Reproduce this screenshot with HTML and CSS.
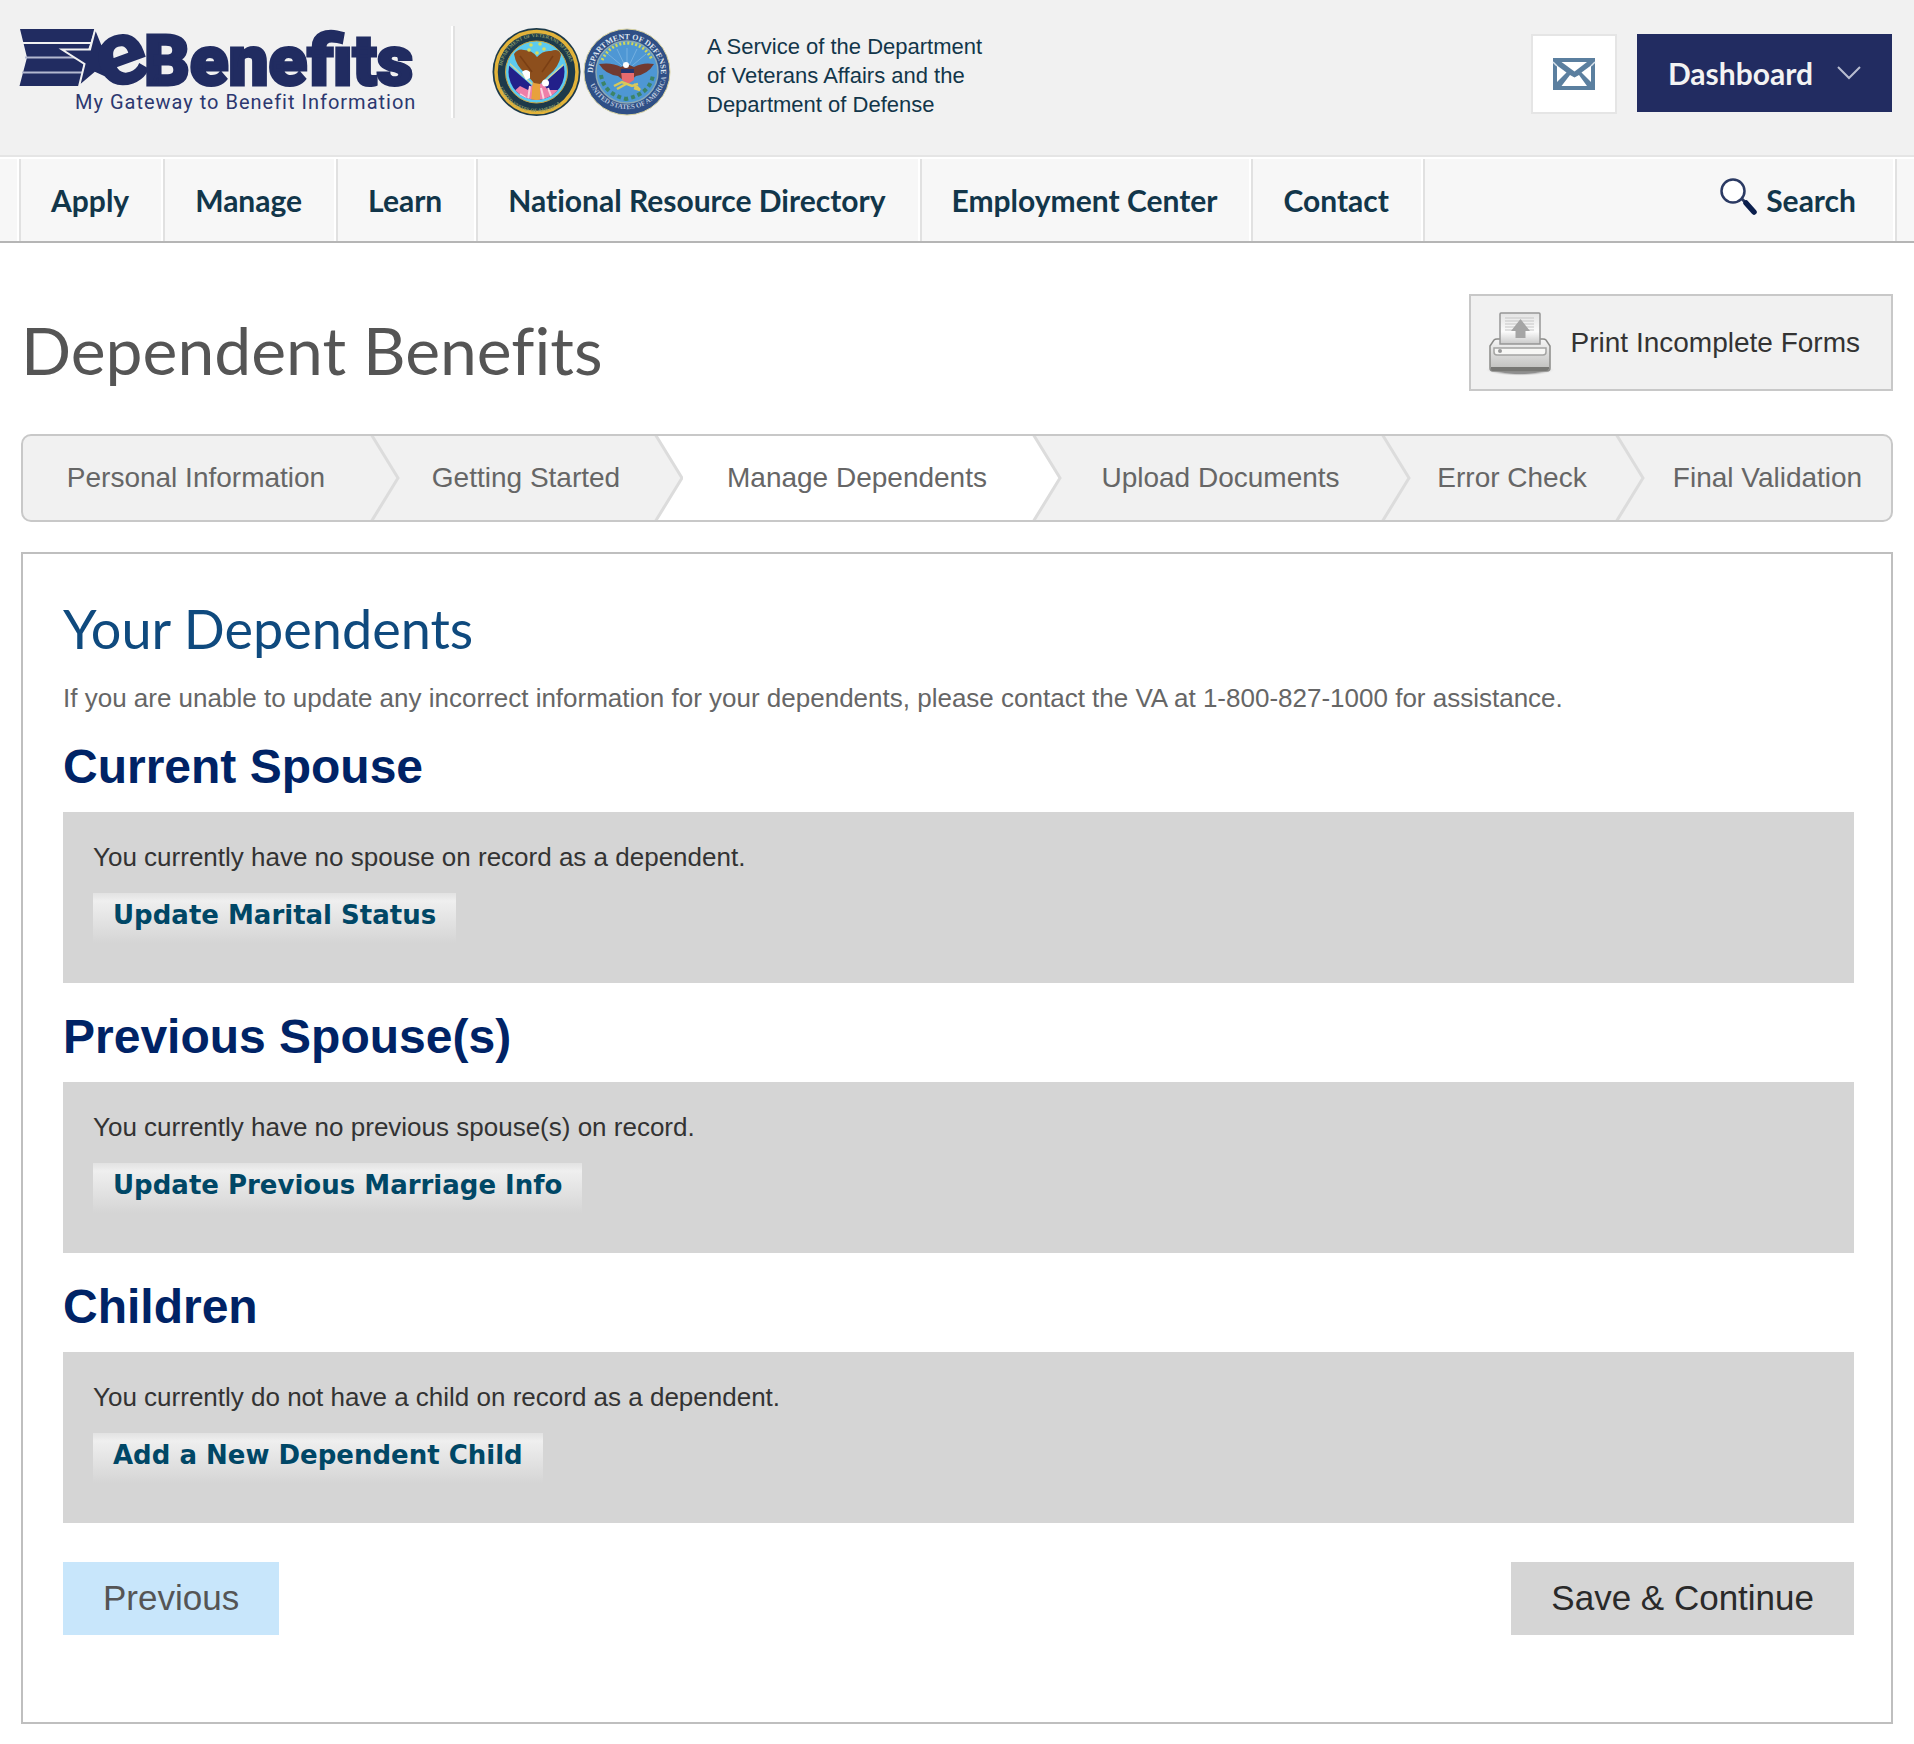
FILE: index.html
```html
<!DOCTYPE html>
<html lang="en">
<head>
<meta charset="utf-8">
<title>Dependent Benefits - eBenefits</title>
<meta name="viewport" content="width=device-width, initial-scale=1">
<link rel="stylesheet" href="styles.css">
</head>
<body>
<header class="masthead">
  <a class="logo" href="#" aria-label="eBenefits home">
    <svg width="400" height="92" viewBox="18 26 400 92" role="img">
      <path d="M20 29H95L88 86H19.500L27 57.500Z" fill="#212c61"/>
      <path d="M80 86L84 62L95 29H100V86Z" fill="#f1f1f1"/>
      <path d="M22 43H92" stroke="#f1f1f1" stroke-width="2"/>
      <path d="M25 57.500H84M22 72.500H82" stroke="#b3b8d0" stroke-width="2"/>
      <path d="M95.500 28L102 44L113 42L106 60L106 78L95 73L79 86.500L84.500 64L62 49.500H90Z" fill="#212c61" stroke="#f1f1f1" stroke-width="2"/>
      <text class="logo-e" x="121" y="85" text-anchor="middle" transform="rotate(-20 121 58)">e</text>
      <text class="logo-name" x="144" y="85">Benefits</text>
      <text class="logo-tag" x="75" y="109">My Gateway to Benefit Information</text>
    </svg>
  </a>
  <span class="divider"></span>
  <svg class="seals" width="182" height="92" viewBox="490 26 182 92" aria-hidden="true">
    <defs>
      <path id="va-top" d="M501.500 72A35 35 0 0 1 571.500 72"/>
      <path id="va-bottom" d="M496.500 72A40 40 0 0 0 576.500 72"/>
      <path id="dod-top" d="M593.500 79A34 34 0 1 1 660.500 79"/>
      <path id="dod-bottom" d="M588 78A40 40 0 0 0 666 78"/>
      <clipPath id="va-clip"><circle cx="536.500" cy="72" r="28"/></clipPath>
    </defs>
    <circle cx="536.500" cy="72" r="44" fill="#1d3a4a"/>
    <circle cx="536.500" cy="72" r="40.500" fill="none" stroke="#e2b33a" stroke-width="3.500"/>
    <circle cx="536.500" cy="72" r="31" fill="#5ccbef" stroke="#c9a640" stroke-width="1"/>
    <g clip-path="url(#va-clip)">
      <path d="M505 62L530 84L536 92L544 82L568 62V104H505Z" fill="#22208a"/>
      <path d="M508 62L532 84M566 62L542 84" stroke="#c9d6a0" stroke-width="1.500"/>
      <path d="M511 94L520 86L528 90L535 82L543 84L548 90L558 90L564 98L552 104H520Z" fill="#ee7fa8"/>
      <path d="M520 94L526 98M548 88L552 98M530 86L528 100M541 88L544 100" stroke="#fbd3df" stroke-width="2"/>
      <path d="M533 78H540V104H531Z" fill="#e8a13c"/>
    </g>
    <path d="M514 54Q518 48 524 50Q532 50 537 57Q543 50 551 51Q559 48 561 55Q559 67 549 75L540 84L534 83L525 73Q516 66 514 54Z" fill="#8d4f1d"/>
    <path d="M520 56L532 72M553 56L542 72" stroke="#7a3f14" stroke-width="1.500"/>
    <path d="M522 72Q526 68 530 72L530 78L526 80Z" fill="#fff"/>
    <circle cx="545.500" cy="83" r="3.500" fill="#fff"/>
    <g fill="#d8dc5a"><circle cx="531" cy="45" r="1.800"/><circle cx="540" cy="44" r="1.800"/><circle cx="544" cy="49" r="1.800"/><circle cx="529" cy="50" r="1.800"/><circle cx="537" cy="53" r="1.800"/></g>
    <text class="seal-text va"><textPath href="#va-top" startOffset="6">DEPARTMENT OF VETERANS AFFAIRS</textPath></text>
    <text class="seal-text va"><textPath href="#va-bottom" startOffset="16">UNITED STATES OF AMERICA</textPath></text>

    <circle cx="627" cy="72" r="43" fill="#2f4f86" stroke="#d9d3a0" stroke-width="1"/>
    <circle cx="627" cy="72" r="31" fill="#4e97d4" stroke="#8aa9b6" stroke-width="1.500"/>
    <g stroke="#74b0e0" stroke-width="1"><path d="M627 70V48M627 70L617 49M627 70L637 49M627 70L608 54M627 70L646 54"/></g>
    <path d="M602 60Q610 44 627 43Q645 44 652 60" fill="none" stroke="#cfd65a" stroke-width="3" stroke-dasharray="2 2"/>
    <path d="M601 75Q604 94 626 99Q650 94 653 75" fill="none" stroke="#3c8468" stroke-width="4" stroke-dasharray="4 3"/>
    <path d="M599 64Q612 62 621 67L627 64L634 67Q643 62 654 64Q648 74 636 76L631 80H623L618 76Q605 74 599 64Z" fill="#713a31"/>
    <path d="M621 71H634V80L628 84L622 80Z" fill="#e76b6f"/>
    <path d="M621 69H634V73H621Z" fill="#25356f"/>
    <circle cx="626" cy="65" r="3" fill="#fff"/>
    <path d="M614 86L622 82L632 86L638 84M617 89L626 84M634 84L640 90L634 88" stroke="#d9c95a" stroke-width="2.500" fill="none"/>
    <text class="seal-text dod"><textPath href="#dod-top" startOffset="6">DEPARTMENT OF DEFENSE</textPath></text>
    <text class="seal-text dod-low"><textPath href="#dod-bottom" startOffset="7">UNITED STATES OF AMERICA</textPath></text>
  </svg>
  <p class="service">A Service of the Department<br>of Veterans Affairs and the<br>Department of Defense</p>
  <div class="account">
    <button class="mail" type="button" aria-label="Messages">
      <svg width="42" height="32" viewBox="0 0 42 32">
        <path fill="#5b7f9f" d="M0 0H42V32H0Z"/>
        <path fill="#fff" d="M8.500 4H34L21.500 13.500Z"/>
        <path fill="#fff" d="M4 7.500L13.500 14.500L4 24Z"/>
        <path fill="#fff" d="M38 7.500L28.500 14.500L38 24Z"/>
        <path fill="#fff" d="M8.500 28L17 17L21.500 19.500L26 17L34 28Z"/>
        <path d="M0 4L4 8M42 4L38 8" stroke="#dbe4ec" stroke-width="1.500"/>
      </svg>
    </button>
    <button class="dashboard" type="button">Dashboard
      <svg width="24" height="14" viewBox="0 0 24 14"><path d="M1 1L12 12L23 1" fill="none" stroke="#b9bdd0" stroke-width="2"/></svg>
    </button>
  </div>
</header>

<nav class="navbar" aria-label="Main">
  <ul class="menu">
    <li><a href="#">Apply</a></li>
    <li><a href="#">Manage</a></li>
    <li><a href="#">Learn</a></li>
    <li><a href="#">National Resource Directory</a></li>
    <li><a href="#">Employment Center</a></li>
    <li><a href="#">Contact</a></li>
  </ul>
  <a class="search" href="#">
    <svg width="38" height="46" viewBox="0 0 38 46">
      <circle cx="13" cy="14" r="11.500" fill="#fff" stroke="#2b3a63" stroke-width="2.500"/>
      <path d="M22 22L26 26" stroke="#2b3a63" stroke-width="3"/>
      <path d="M26 26L34 35" stroke="#0b1f4d" stroke-width="5.500" stroke-linecap="round"/>
    </svg>
    Search
  </a>
</nav>

<main class="content">
  <div class="title-row">
    <h1>Dependent Benefits</h1>
    <button class="print" type="button">
      <svg width="70" height="66" viewBox="0 0 70 66">
        <defs>
          <linearGradient id="body" x1="0" y1="0" x2="0" y2="1"><stop offset="0" stop-color="#f6f6f6"/><stop offset="1" stop-color="#bdbdbb"/></linearGradient>
          <linearGradient id="sheet" x1="0" y1="0" x2="0" y2="1"><stop offset="0" stop-color="#e4e4e4"/><stop offset=".6" stop-color="#fbfbfb"/><stop offset="1" stop-color="#c9c9c9"/></linearGradient>
          <radialGradient id="shade"><stop offset=".6" stop-color="#8f8f8f"/><stop offset="1" stop-color="#f1f1f1" stop-opacity="0"/></radialGradient>
        </defs>
        <ellipse cx="35" cy="60" rx="35" ry="6" fill="url(#shade)"/>
        <path d="M5 36L9 30Q10 29 12 29H58Q60 29 61 30L65 36V58Q65 61 62 61H8Q5 61 5 58Z" fill="url(#body)" stroke="#8a8a88" stroke-width="1.500"/>
        <path d="M6 57H64V59Q63 61 61 61H9Q6 61 6 59Z" fill="#777774"/>
        <path d="M15 34V4Q15 3 16 3H54Q55 3 55 4V34Z" fill="url(#sheet)" stroke="#969696" stroke-width="1.500"/>
        <path d="M20 8H49M20 11H49M20 14H49M20 17H49M20 20H49" stroke="#c5c5c5" stroke-width="1"/>
        <path d="M35.500 9L45 21H40.500V28H30.500V21H26Z" fill="#a5a5a5"/>
        <path d="M9 38H61V42Q61 45 58 45H12Q9 45 9 42Z" fill="#f7f7f5" stroke="#a4a4a2" stroke-width="1.500"/>
        <circle cx="15" cy="41" r="2" fill="#999"/>
      </svg>
      Print Incomplete Forms
    </button>
  </div>

  <ol class="steps">
    <li><span>Personal Information</span><svg class="arrow" viewBox="0 0 30 84"><path class="edge" d="M2 -2L29 42L2 86"/></svg></li>
    <li><span>Getting Started</span><svg class="arrow" viewBox="0 0 30 84"><path class="next-active" d="M2 0H30V84H2L29 42Z"/><path class="edge" d="M2 -2L29 42L2 86"/></svg></li>
    <li class="active" aria-current="step"><span>Manage Dependents</span><svg class="arrow" viewBox="0 0 30 84"><path class="next" d="M2 0H30V84H2L29 42Z"/><path class="edge" d="M2 -2L29 42L2 86"/></svg></li>
    <li><span>Upload Documents</span><svg class="arrow" viewBox="0 0 30 84"><path class="edge" d="M2 -2L29 42L2 86"/></svg></li>
    <li><span>Error Check</span><svg class="arrow" viewBox="0 0 30 84"><path class="edge" d="M2 -2L29 42L2 86"/></svg></li>
    <li><span>Final Validation</span></li>
  </ol>

  <section class="panel">
    <h2>Your Dependents</h2>
    <p class="intro">If you are unable to update any incorrect information for your dependents, please contact the VA at 1-800-827-1000 for assistance.</p>

    <h3>Current Spouse</h3>
    <div class="record">
      <p>You currently have no spouse on record as a dependent.</p>
      <button class="update" type="button">Update Marital Status</button>
    </div>

    <h3>Previous Spouse(s)</h3>
    <div class="record">
      <p>You currently have no previous spouse(s) on record.</p>
      <button class="update" type="button">Update Previous Marriage Info</button>
    </div>

    <h3>Children</h3>
    <div class="record">
      <p>You currently do not have a child on record as a dependent.</p>
      <button class="update" type="button">Add a New Dependent Child</button>
    </div>

    <div class="actions">
      <button class="previous" type="button">Previous</button>
      <button class="save" type="button">Save &amp; Continue</button>
    </div>
  </section>
</main>
</body>
</html>
```
FILE: styles.css
```css
* { box-sizing: border-box; }

body {
  margin: 0;
  background: #fff;
  color: #333;
  font-family: "Liberation Sans", Arial, sans-serif;
  font-size: 26px;
  line-height: 30px;
}

h1, h2, h3, p, ul, ol { margin: 0; padding: 0; }
ul, ol { list-style: none; }
svg { display: block; flex: none; overflow: visible; }
button { border: 0; font: inherit; color: inherit; cursor: pointer; white-space: nowrap; }
a { color: inherit; text-decoration: none; }

/* Masthead */
.masthead {
  display: flex;
  align-items: flex-start;
  padding: 26px 22px 36px 18px;
  background: #f1f1f1;
  color: #12364a;
}
.logo-e { font: 900 94px Roboto, sans-serif; fill: #212c61; }
.logo-name { font: 900 71px Roboto, sans-serif; fill: #212c61; stroke: #212c61; stroke-width: 3px; }
.logo-tag { font: 400 20px Roboto, sans-serif; fill: #2c3870; letter-spacing: 1px; }
.divider {
  width: 4px;
  height: 92px;
  margin: 0 35px 0 33px;
  background: #e1e1e1;
  border-left: 2px solid #fff;
}
.seal-text { font-family: "Liberation Serif", serif; font-weight: bold; }
.seal-text.va { font-size: 5px; fill: #8a9a6a; }
.seal-text.dod { font-size: 8px; fill: #dfe6f0; }
.seal-text.dod-low { font-size: 7px; fill: #b9c6dc; }
.service {
  margin-left: 35px;
  padding-top: 6px;
  font-size: 22px;
  line-height: 29px;
}
.account {
  display: flex;
  align-items: flex-start;
  gap: 20px;
  margin-left: auto;
  padding-top: 8px;
}
.mail {
  padding: 22px 20px;
  background: #fff;
  border: 2px solid #e5e5e5;
}
.dashboard {
  display: flex;
  align-items: center;
  gap: 24px;
  padding: 20px 31px;
  background: #222c61;
  color: #f3f3f3;
  font: bold 30px/38px Lato, sans-serif;
}

/* Navigation */
.navbar {
  display: flex;
  justify-content: space-between;
  padding: 0 17px;
  background: #f7f7f7;
  border-top: 2px solid #e5e5e5;
  border-bottom: 2px solid #b5b5b5;
  box-shadow: inset 0 2px #fff;
  color: #12364a;
  font: bold 30px/82px Lato, sans-serif;
  font-variant-ligatures: none;
}
.menu {
  display: flex;
  border-left: 2px solid #fff;
  margin-top: 2px;
}
.menu li {
  padding: 0 34px 0 30px;
  border-right: 2px solid #e1e1e1;
  box-shadow: inset -2px 0 #fff;
}
.menu li:first-child { border-left: 2px solid #e1e1e1; }
.search {
  display: flex;
  align-items: center;
  gap: 8px;
  margin-top: 2px;
  padding-right: 39px;
  border-right: 2px solid #e1e1e1;
  box-shadow: inset -2px 0 #fff;
}

/* Page */
.content { padding: 51px 21px 20px; }
.title-row {
  display: flex;
  justify-content: space-between;
  align-items: flex-end;
}
h1 {
  color: #555;
  font: normal 66px/82px Lato, sans-serif;
  font-variant-ligatures: none;
}
.print {
  display: flex;
  align-items: center;
  gap: 16px;
  padding: 14px 31px 13px 14px;
  background: #f1f1f1;
  border: 2px solid #c8c8c8;
  font-size: 28px;
}

.steps {
  display: grid;
  grid-template-columns: 376fr 284fr 378fr 349fr 234fr 247fr;
  margin-top: 43px;
  overflow: hidden;
  background: #f1f1f1;
  border: 2px solid #c8c8c8;
  border-radius: 10px;
  color: #666;
  font-size: 28px;
}
.steps li { display: flex; align-items: center; height: 84px; }
.steps span { flex: 1; text-align: center; white-space: nowrap; }
.steps .active { background: #fff; }
.arrow { width: 30px; height: 84px; }
.arrow .edge { fill: none; stroke: #dcdcdc; stroke-width: 3px; }
.arrow .next { fill: #f1f1f1; }
.arrow .next-active { fill: #fff; }

.panel {
  margin-top: 30px;
  padding: 41px 37px 87px 40px;
  border: 2px solid #bfbfbf;
}
h2 {
  color: #0f4a7e;
  font: normal 54px/68px Lato, sans-serif;
}
.intro { margin-top: 20px; color: #666; }
h3 {
  margin: 26px 0 17px;
  color: #002366;
  font-size: 48px;
  line-height: 56px;
}
.record {
  padding: 30px 30px 40px;
  background: #d5d5d5;
}
.update {
  display: block;
  margin-top: 21px;
  padding: 7px 20px 13px;
  background: linear-gradient(#e2e2e2, #efefef 8px, #d5d5d5);
  color: #004766;
  font: bold 26px/30px Verdana, "DejaVu Sans", sans-serif;
}
.actions {
  display: flex;
  justify-content: space-between;
  margin-top: 39px;
  font-size: 35px;
  line-height: 41px;
}
.actions button { padding: 15px 40px 17px; }
.previous { background: #c8e6fb; color: #555; }
.save { background: #d5d5d5; color: #2a2a2a; }
```
